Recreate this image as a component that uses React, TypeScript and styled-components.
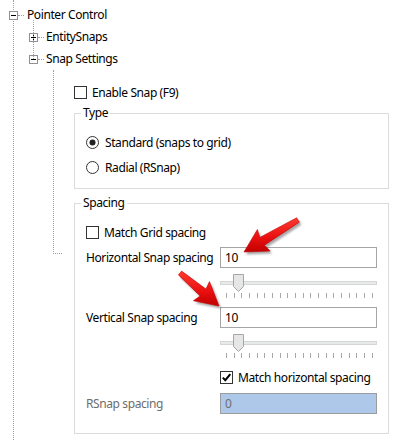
import React from 'react';
import styled, { createGlobalStyle } from 'styled-components';

const GlobalStyle = createGlobalStyle`
  html, body {
    margin: 0;
    padding: 0;
    background: #ffffff;
  }
  body {
    font-family: "Noto Sans", "Open Sans", sans-serif;
    font-size: 12px;
    letter-spacing: -0.4px;
    color: #000000;
  }
`;

const Page = styled.div`
  position: relative;
  width: 404px;
  height: 440px;
  overflow: hidden;
  background: #ffffff;
`;

const TreeRoot = styled.div`
  box-sizing: border-box;
  height: 440px;
  margin-left: 13px;
  padding-top: 4px;
  border-left: 1px dotted #a0a0a0;
`;

const NodeRow = styled.div`
  display: flex;
  align-items: center;
  height: 22px;
  line-height: 16px;
  white-space: nowrap;
`;

const ExpanderBox = styled.svg<{ $offset: number }>`
  flex-shrink: 0;
  margin-left: ${p => p.$offset}px;
  display: block;
`;

const Connector = styled.span`
  width: 6px;
  height: 0;
  border-top: 1px dotted #a0a0a0;
`;

const NodeLabel = styled.span<{ $gap: number }>`
  margin-left: ${p => p.$gap}px;
`;

const Branch = styled.div`
  position: relative;
  margin-left: 19px;

  &::before {
    content: '';
    position: absolute;
    left: 0;
    top: -6px;
    bottom: 11px;
    border-left: 1px dotted #a0a0a0;
  }
`;

const PanelArea = styled.div`
  display: flex;
  align-items: flex-start;
  margin-left: 39px;
`;

const Elbow = styled.div`
  box-sizing: border-box;
  flex-shrink: 0;
  width: 9px;
  height: 184px;
  border-left: 1px dotted #a0a0a0;
  border-bottom: 1px dotted #a0a0a0;
`;

const Panel = styled.div`
  display: flex;
  flex-direction: column;
  width: 315px;
  margin-left: 12px;
`;

const CheckRow = styled.label<{ $top: number; $indent?: number }>`
  display: flex;
  align-items: center;
  gap: 5px;
  height: 13px;
  margin-top: ${p => p.$top}px;
  margin-left: ${p => p.$indent || 0}px;
  line-height: 16px;
  white-space: nowrap;
`;

const Box = styled.span`
  box-sizing: border-box;
  display: flex;
  align-items: center;
  justify-content: center;
  flex-shrink: 0;
  width: 13px;
  height: 13px;
  border: 1px solid #333333;
  background: #ffffff;
`;

const RadioRow = styled.label<{ $top: number }>`
  display: flex;
  align-items: center;
  gap: 6px;
  height: 13px;
  margin-top: ${p => p.$top}px;
  line-height: 16px;
  white-space: nowrap;
`;

const GroupBox = styled.fieldset<{ $top: number; $bottom: number }>`
  box-sizing: border-box;
  width: 315px;
  min-width: 0;
  margin: ${p => p.$top}px 0 0 0;
  padding: 0 11px ${p => p.$bottom}px 11px;
  border: 1px solid #dcdcdc;
  display: flex;
  flex-direction: column;
`;

const Legend = styled.legend`
  padding: 0 2px;
  margin-left: -5px;
  line-height: 16px;
`;

const FieldRow = styled.div<{ $top: number }>`
  display: grid;
  grid-template-columns: 134px 157px;
  align-items: center;
  height: 21px;
  margin-top: ${p => p.$top}px;
`;

const FieldLabel = styled.span<{ $disabled?: boolean }>`
  color: ${p => (p.$disabled ? '#6d6d6d' : '#000000')};
  white-space: nowrap;
  line-height: 16px;
`;

const TextBox = styled.input<{ $disabled?: boolean }>`
  box-sizing: border-box;
  width: 157px;
  height: 21px;
  margin: 0;
  padding: 0 4px;
  border: 1px solid ${p => (p.$disabled ? '#9c9c9c' : '#a5a5a5')};
  background: ${p => (p.$disabled ? '#adc8e8' : '#ffffff')};
  color: ${p => (p.$disabled ? '#6d6d6d' : '#000000')};
  font: inherit;
  letter-spacing: inherit;
  outline: none;
`;

const Slider = styled.div<{ $top: number }>`
  position: relative;
  width: 157px;
  height: 27px;
  margin-top: ${p => p.$top}px;
  margin-left: 134px;
`;

const Track = styled.div`
  box-sizing: border-box;
  margin-top: 8px;
  height: 4px;
  background: #e7eaea;
  border: 1px solid #d6d6d6;
`;

const Thumb = styled.svg<{ $left: number }>`
  position: absolute;
  top: 1px;
  left: ${p => p.$left}px;
  display: block;
`;

const Ticks = styled.div`
  display: flex;
  justify-content: space-between;
  width: 147px;
  margin-top: 8px;
  margin-left: 6px;
`;

const Tick = styled.span`
  width: 1px;
  height: 5px;
  background: #a8a8a8;
`;

const ArrowLayer = styled.svg`
  position: absolute;
  top: 0;
  left: 0;
  pointer-events: none;
`;

const Expander = ({ open, offset }: { open: boolean; offset: number }) => (
  <ExpanderBox $offset={offset} width="9" height="9" viewBox="0 0 9 9">
    <rect x="0.5" y="0.5" width="8" height="8" fill="#fff" stroke="#919191" />
    <line x1="2" y1="4.5" x2="7" y2="4.5" stroke="#000" />
    {!open && <line x1="4.5" y1="2" x2="4.5" y2="7" stroke="#000" />}
  </ExpanderBox>
);

const CheckBox = ({ checked }: { checked?: boolean }) => (
  <Box>
    {checked && (
      <svg width="11" height="11" viewBox="0 0 11 11">
        <path d="M1.8 5.6 L4.3 8.2 L9.3 2.2" fill="none" stroke="#000" strokeWidth="2" />
      </svg>
    )}
  </Box>
);

const Radio = ({ checked }: { checked?: boolean }) => (
  <svg width="13" height="13" viewBox="0 0 13 13" style={{ flexShrink: 0 }}>
    <circle cx="6.5" cy="6.5" r="6" fill="#fff" stroke="#333" />
    {checked && <circle cx="6.5" cy="6.5" r="3" fill="#222" />}
  </svg>
);

const TrackBar = ({ top, value }: { top: number; value: number }) => (
  <Slider $top={top}>
    <Track />
    <Thumb $left={value} width="11" height="18" viewBox="0 0 11 18">
      <path d="M0.5 0.5 H10.5 V12.5 L5.5 17.5 L0.5 12.5 Z" fill="#e6e6e6" stroke="#a6a6a6" />
    </Thumb>
    <Ticks>
      {Array.from({ length: 20 }).map((_, i) => (
        <Tick key={i} />
      ))}
    </Ticks>
  </Slider>
);

type Pt = [number, number];

// builds the outline of a fat callout arrow from tail to tip
function arrowPoints(tail: Pt, tip: Pt) {
  const dx = tip[0] - tail[0];
  const dy = tip[1] - tail[1];
  const len = Math.hypot(dx, dy);
  const u: Pt = [dx / len, dy / len];
  const n: Pt = [-u[1], u[0]];
  const at = (back: number, side: number): Pt => [
    tip[0] - u[0] * back + n[0] * side,
    tip[1] - u[1] * back + n[1] * side,
  ];
  const head = 21;
  const pts: Pt[] = [
    tip,
    at(head + 2, 12.5),
    at(head, 4.5),
    at(len, 2.5),
    at(len, -2.5),
    at(head, -4.5),
    at(head + 2, -12.5),
  ];
  return pts.map(p => `${p[0].toFixed(1)},${p[1].toFixed(1)}`).join(' ');
}

const arrows: { tail: Pt; tip: Pt }[] = [
  { tail: [298, 220], tip: [244, 252] },
  { tail: [180, 273], tip: [219, 306] },
];

const Arrows = () => (
  <ArrowLayer width="404" height="440" viewBox="0 0 404 440">
    <defs>
      <filter id="arrowShadow" x="-20%" y="-20%" width="140%" height="140%">
        <feGaussianBlur stdDeviation="1.2" />
      </filter>
      <linearGradient id="arrowFill" x1="0" y1="0" x2="0" y2="1">
        <stop offset="0" stopColor="#ff3a30" />
        <stop offset="0.6" stopColor="#e80f0f" />
        <stop offset="1" stopColor="#c00000" />
      </linearGradient>
    </defs>
    {arrows.map((a, i) => (
      <g key={i}>
        <polygon
          points={arrowPoints(a.tail, a.tip)}
          transform="translate(2 2.5)"
          fill="#000"
          opacity="0.35"
          filter="url(#arrowShadow)"
        />
        <polygon
          points={arrowPoints(a.tail, a.tip)}
          fill="url(#arrowFill)"
          stroke="#c80000"
          strokeWidth="0.6"
          strokeLinejoin="round"
        />
      </g>
    ))}
  </ArrowLayer>
);

export default function App() {
  return (
    <Page>
      <GlobalStyle />
      <TreeRoot>
        <NodeRow>
          <Expander open offset={-5} />
          <Connector />
          <NodeLabel $gap={3}>Pointer Control</NodeLabel>
        </NodeRow>
        <Branch>
          <NodeRow>
            <Expander open={false} offset={-4} />
            <Connector />
            <NodeLabel $gap={2}>EntitySnaps</NodeLabel>
          </NodeRow>
          <NodeRow>
            <Expander open offset={-4} />
            <Connector />
            <NodeLabel $gap={2}>Snap Settings</NodeLabel>
          </NodeRow>
        </Branch>
        <PanelArea>
          <Elbow />
          <Panel>
            <CheckRow $top={16}>
              <CheckBox />
              Enable Snap (F9)
            </CheckRow>

            <GroupBox $top={6} $bottom={14}>
              <Legend>Type</Legend>
              <RadioRow $top={15}>
                <Radio checked />
                Standard (snaps to grid)
              </RadioRow>
              <RadioRow $top={12}>
                <Radio />
                Radial (RSnap)
              </RadioRow>
            </GroupBox>

            <GroupBox $top={6} $bottom={19}>
              <Legend>Spacing</Legend>
              <CheckRow $top={15}>
                <CheckBox />
                Match Grid spacing
              </CheckRow>
              <FieldRow $top={8}>
                <FieldLabel>Horizontal Snap spacing</FieldLabel>
                <TextBox defaultValue="10" readOnly />
              </FieldRow>
              <TrackBar top={5} value={13} />
              <FieldRow $top={7}>
                <FieldLabel>Vertical Snap spacing</FieldLabel>
                <TextBox defaultValue="10" readOnly />
              </FieldRow>
              <TrackBar top={5} value={13} />
              <CheckRow $top={11} $indent={134}>
                <CheckBox checked />
                Match horizontal spacing
              </CheckRow>
              <FieldRow $top={9}>
                <FieldLabel $disabled>RSnap spacing</FieldLabel>
                <TextBox $disabled defaultValue="0" readOnly />
              </FieldRow>
            </GroupBox>
          </Panel>
        </PanelArea>
      </TreeRoot>
      <Arrows />
    </Page>
  );
}
